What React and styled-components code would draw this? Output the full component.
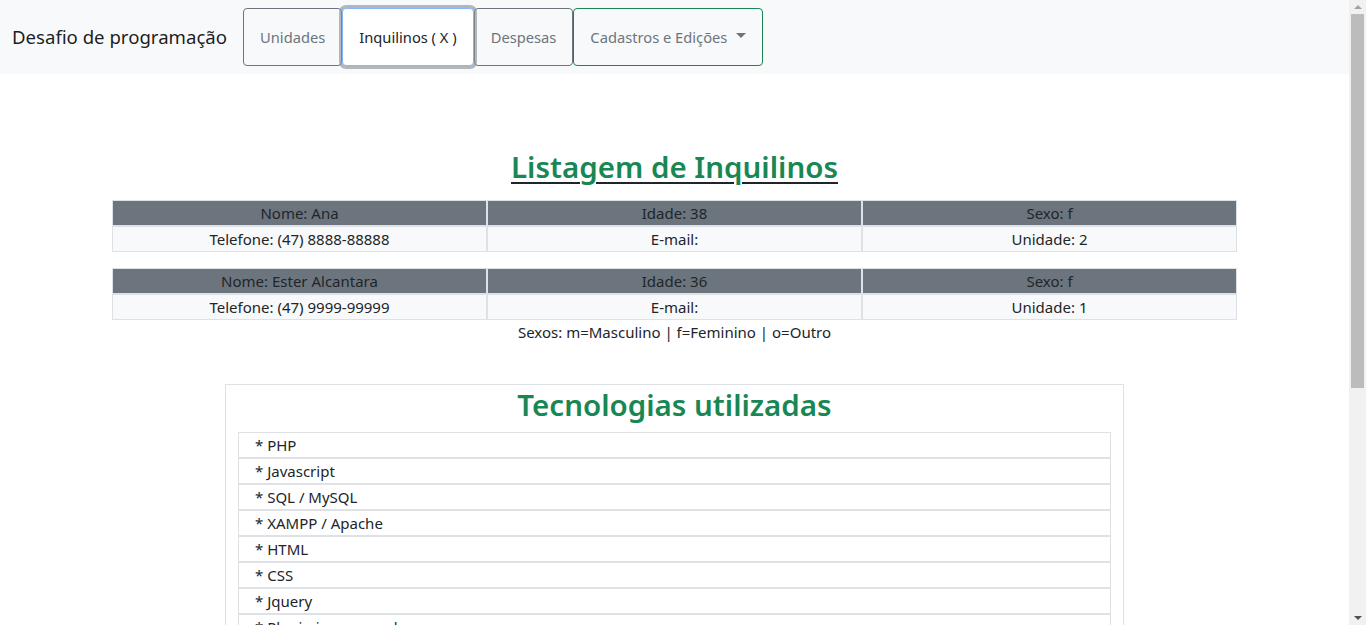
import React from "react";
import styled, { createGlobalStyle } from "styled-components";

const Global = createGlobalStyle`
  html, body { margin: 0; padding: 0; height: 100%; overflow: hidden; }
  body {
    font-family: "Noto Sans", "Open Sans", sans-serif;
    font-size: 15px;
    line-height: 24px;
    color: #212529;
    background: #fff;
  }
  * { box-sizing: border-box; }
`;

const Page = styled.div`
  display: flex;
  height: 100vh;
`;

const Viewport = styled.div`
  flex: 1;
  min-width: 0;
  overflow: hidden;
`;

const ScrollTrack = styled.div`
  width: 17px;
  flex: none;
  background: #f1f1f1;
  display: flex;
  flex-direction: column;
  align-items: center;
`;

const Arrow = styled.div`
  height: 14px;
  width: 100%;
  display: flex;
  align-items: center;
  justify-content: center;
  &::before {
    content: "";
    width: 0;
    height: 0;
    border-left: 4px solid transparent;
    border-right: 4px solid transparent;
    ${(p) =>
      p.$down
        ? "border-top: 4px solid #505050;"
        : "border-bottom: 4px solid #a3a3a3;"}
  }
`;

const Thumb = styled.div`
  width: 13px;
  height: 374px;
  background: #bcbcbc;
`;

const Spacer = styled.div`
  flex: 1;
`;

const Navbar = styled.nav`
  display: flex;
  align-items: center;
  background: #f8f9fa;
  padding: 8px 12px;
  height: 74px;
`;

const Brand = styled.span`
  font-size: 18.6px;
  line-height: 30px;
  color: rgba(0, 0, 0, 0.9);
  margin-right: 16px;
  white-space: nowrap;
`;

const Buttons = styled.div`
  display: flex;
`;

const borderFor = (v) =>
  v === "active" ? "#86b7fe" : v === "success" ? "#198754" : "#6c757d";

const NavButton = styled.button`
  font-family: inherit;
  font-size: 14.7px;
  line-height: 24px;
  padding: 16px;
  border: 1px solid ${(p) => borderFor(p.$variant)};
  border-radius: 4px;
  background: ${(p) => (p.$variant === "active" ? "#fff" : "transparent")};
  color: ${(p) => (p.$variant === "active" ? "#212529" : "#6c757d")};
  box-shadow: ${(p) =>
    p.$variant === "active" ? "0 0 0 3px rgba(130, 138, 145, 0.6)" : "none"};
  position: relative;
  z-index: ${(p) => (p.$variant === "active" ? 1 : 0)};
  white-space: nowrap;
  display: flex;
  align-items: center;
`;

const Caret = styled.span`
  display: inline-block;
  margin-left: 9px;
  width: 0;
  height: 0;
  border-top: 5px solid #6c757d;
  border-left: 5px solid transparent;
  border-right: 5px solid transparent;
  margin-bottom: 3px;
`;

const Main = styled.main`
  width: 1125px;
  margin: 0 auto;
  padding-top: 74px;
  padding-bottom: 60px;
`;

const Title = styled.h2`
  margin: 0 0 14px;
  font-size: 29.5px;
  line-height: 38px;
  font-weight: 600;
  text-align: center;
  color: #198754;
`;

const Underlined = styled.span`
  text-decoration: underline;
  text-decoration-color: #212529;
  text-decoration-thickness: 2px;
  text-underline-offset: 4px;
`;

const Table = styled.div`
  display: grid;
  grid-template-columns: repeat(3, 1fr);
  margin-bottom: 16px;
  &:last-of-type { margin-bottom: 0; }
`;

const Cell = styled.div`
  border: 1px solid #dee2e6;
  text-align: center;
  line-height: 24px;
  background: ${(p) => (p.$head ? "#6c757d" : "#f8f9fa")};
  color: #212529;
`;

const Legend = styled.p`
  margin: 0;
  text-align: center;
  line-height: 24px;
`;

const Card = styled.section`
  width: 899px;
  margin: 40px auto 0;
  border: 1px solid #dee2e6;
  padding: 1px 12px 12px;
`;

const CardTitle = styled.h2`
  margin: 0 0 8px;
  font-size: 29.5px;
  line-height: 38px;
  font-weight: 600;
  text-align: center;
  color: #198754;
`;

const List = styled.ul`
  list-style: none;
  margin: 0;
  padding: 0;
`;

const Item = styled.li`
  border: 1px solid #dee2e6;
  padding: 0 16px;
  line-height: 24px;
`;

const tenants = [
  { nome: "Ana", idade: 38, sexo: "f", tel: "(47) 8888-88888", email: "", unidade: 2 },
  { nome: "Ester Alcantara", idade: 36, sexo: "f", tel: "(47) 9999-99999", email: "", unidade: 1 },
];

const techs = [
  "PHP",
  "Javascript",
  "SQL / MySQL",
  "XAMPP / Apache",
  "HTML",
  "CSS",
  "Jquery",
  "Plugin jquery mask",
  "Bootstrap",
  "Git / GitHub",
  "AJAX",
  "JSON",
];

export default function App() {
  return (
    <Page>
      <Global />
      <Viewport>
        <Navbar>
          <Brand>Desafio de programação</Brand>
          <Buttons>
            <NavButton>Unidades</NavButton>
            <NavButton $variant="active">Inquilinos ( X )</NavButton>
            <NavButton>Despesas</NavButton>
            <NavButton $variant="success">
              Cadastros e Edições
              <Caret />
            </NavButton>
          </Buttons>
        </Navbar>
        <Main>
          <Title>
            <Underlined>Listagem de Inquilinos</Underlined>
          </Title>
          {tenants.map((t) => (
            <Table key={t.nome}>
              <Cell $head>Nome: {t.nome}</Cell>
              <Cell $head>Idade: {t.idade}</Cell>
              <Cell $head>Sexo: {t.sexo}</Cell>
              <Cell>Telefone: {t.tel}</Cell>
              <Cell>E-mail: {t.email}</Cell>
              <Cell>Unidade: {t.unidade}</Cell>
            </Table>
          ))}
          <Legend>Sexos: m=Masculino | f=Feminino | o=Outro</Legend>
          <Card>
            <CardTitle>Tecnologias utilizadas</CardTitle>
            <List>
              {techs.map((x) => (
                <Item key={x}>* {x}</Item>
              ))}
            </List>
          </Card>
        </Main>
      </Viewport>
      <ScrollTrack aria-hidden="true">
        <Arrow />
        <Thumb />
        <Spacer />
        <Arrow $down />
      </ScrollTrack>
    </Page>
  );
}
